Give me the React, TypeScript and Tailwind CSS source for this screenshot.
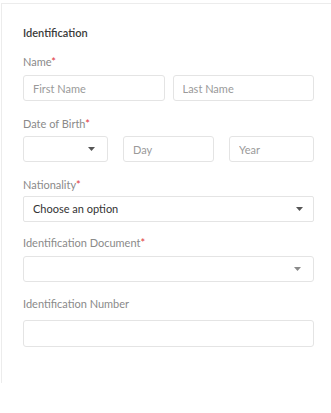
import React from 'react';

const Caret = ({ tone = 'text-[#555]' }: { tone?: string }) => (
  <svg width="7" height="4" viewBox="0 0 7 4" className={tone}>
    <path d="M0 0h7L3.5 4z" fill="currentColor" />
  </svg>
);

const Label = ({ text, required = false, className = '' }: { text: string; required?: boolean; className?: string }) => (
  <div className={`text-[11px] leading-4 text-[#8a8a8a] ${className}`}>
    {text}
    {required && <span className="text-[#e0353b]">*</span>}
  </div>
);

const inputCls =
  'h-[26px] w-full rounded-[3px] border border-[#e4e4e4] bg-white pl-[9px] text-[11px] text-[#333] placeholder:text-[#9a9a9a] outline-none';

const App: React.FC = () => {
  return (
    <div className="min-h-screen w-full overflow-hidden bg-white pt-[3px] pl-[1px]" style={{ fontFamily: 'Lato, "Open Sans", sans-serif' }}>
      <div className="w-[335px] border border-[#ececec] border-b-0 pl-[21px] pr-[21px] pt-[21px] pb-[36px]">
        <h2 className="text-[11px] leading-4 font-semibold text-[#3a3a3a]">Identification</h2>

        {/* Name */}
        <Label text="Name" required className="mt-[13px]" />
        <div className="mt-[5px] grid grid-cols-2 gap-[8px]">
          <input className={inputCls} placeholder="First Name" />
          <input className={inputCls} placeholder="Last Name" />
        </div>

        {/* Date of birth */}
        <Label text="Date of Birth" required className="mt-[15px]" />
        <div className="mt-[4px] grid grid-cols-[85px_1fr_85px] gap-[15px]">
          <div className="flex h-[26px] items-center justify-end rounded-[3px] border border-[#e4e4e4] pr-[12px]">
            <Caret />
          </div>
          <input className={inputCls} placeholder="Day" />
          <input className={inputCls} placeholder="Year" />
        </div>

        {/* Nationality */}
        <Label text="Nationality" required className="mt-[15px]" />
        <div className="mt-[3px] flex h-[26px] items-center justify-between rounded-[2px] border border-[#e4e4e4] pl-[9px] pr-[10px]">
          <span className="text-[11px] text-[#333]">Choose an option</span>
          <Caret />
        </div>

        {/* Identification document */}
        <Label text="Identification Document" required className="mt-[13px]" />
        <div className="mt-[5px] flex h-[26px] items-center justify-end rounded-[3px] border border-[#e4e4e4] pr-[12px]">
          <Caret tone="text-[#8a8a8a]" />
        </div>

        {/* Identification number */}
        <Label text="Identification Number" className="mt-[14px]" />
        <input className={`${inputCls} mt-[8px] h-[27px]`} />
      </div>
    </div>
  );
};

export default App;
